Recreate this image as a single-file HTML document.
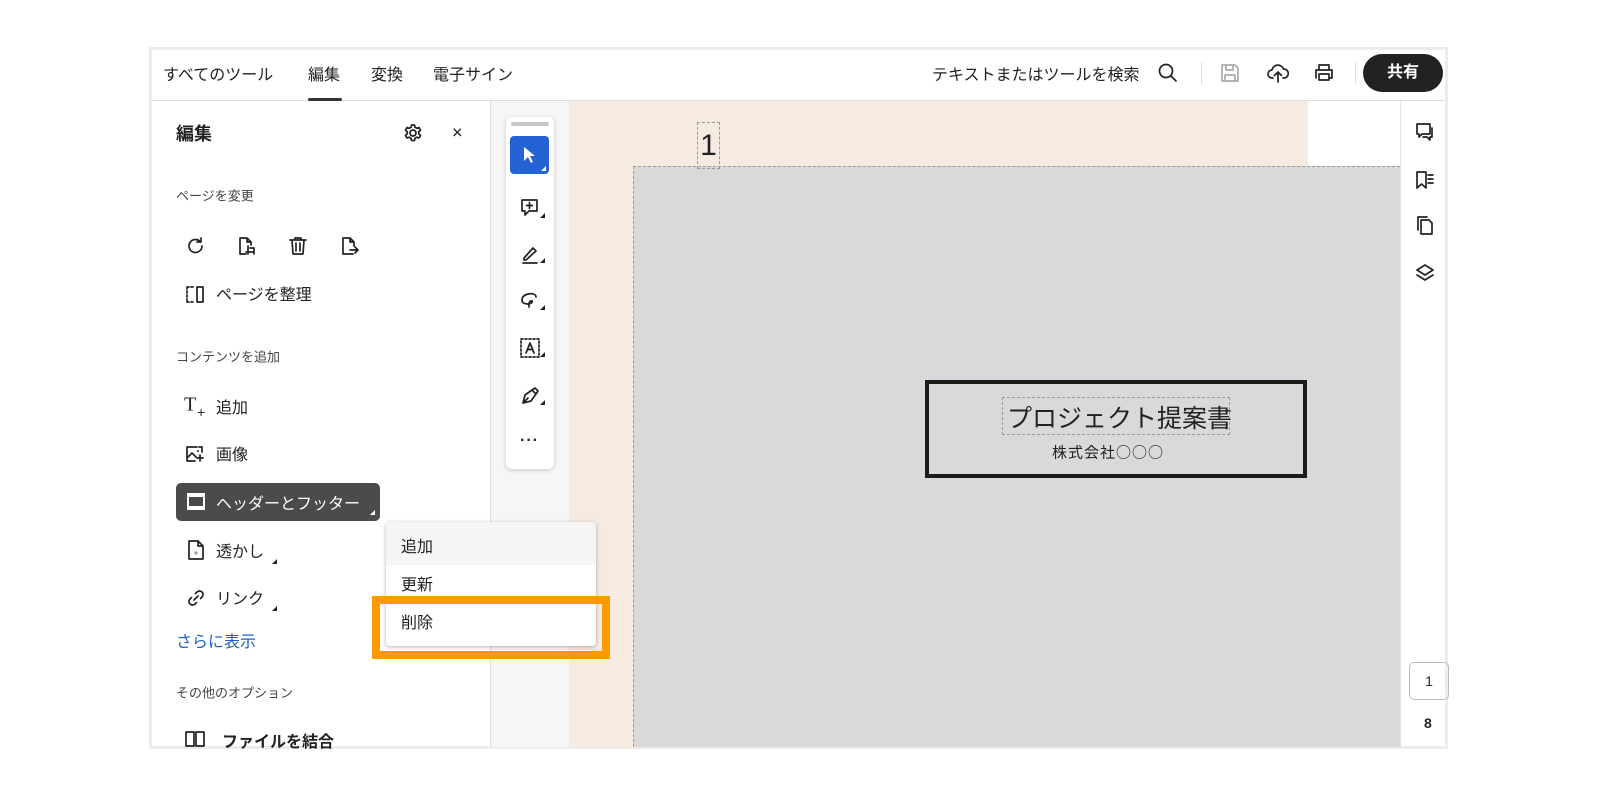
<!DOCTYPE html>
<html><head><meta charset="utf-8"><style>
*{box-sizing:border-box;margin:0;padding:0}
body{width:1600px;height:800px;background:#fff;position:relative;overflow:hidden;font-family:"Liberation Sans","Noto Sans CJK JP",sans-serif;color:#222}
.a{position:absolute}
.frame{left:149px;top:47px;width:1299px;height:702px;border:3px solid #ececec;background:#fff}
.t{position:absolute;white-space:nowrap;transform:translateY(-50%)}
svg{position:absolute;overflow:visible}
.ic{fill:none;stroke:#222;stroke-width:1.7;stroke-linecap:round;stroke-linejoin:round}
.tri{position:absolute;width:0;height:0;border-left:5px solid transparent;border-bottom:5px solid #222}
</style></head><body>
<div class="a frame"></div>
<div class="a" style="left:152px;top:100px;width:1293px;height:1px;background:#ddd"></div>
<div class="t" style="left:163px;top:73px;font-size:16px">すべてのツール</div>
<div class="t" style="left:308px;top:73px;font-size:16px">編集</div>
<div class="a" style="left:308px;top:98px;width:34px;height:3px;background:#333;border-radius:2px"></div>
<div class="t" style="left:371px;top:73px;font-size:16px">変換</div>
<div class="t" style="left:433px;top:73px;font-size:16px">電子サイン</div>
<div class="t" style="left:932px;top:73px;font-size:16px">テキストまたはツールを検索</div>
<svg style="left:1158px;top:63px" width="20" height="20"><circle cx="8" cy="8" r="6.5" class="ic" stroke-width="2"/><path d="M13 13l5 5" class="ic" stroke-width="2"/></svg>
<div class="a" style="left:1201px;top:62px;width:1px;height:22px;background:#ddd"></div>
<svg style="left:1220px;top:63px" width="20" height="20"><path d="M2 2h13l3 3v13H2z M6 2v5h7V2 M5 18v-6h10v6" class="ic" style="stroke:#aaa"/></svg>
<svg style="left:1267px;top:62px" width="22" height="22"><path d="M6 16H5a4 4 0 0 1 0-8 6 6 0 0 1 11.5-1A4.5 4.5 0 0 1 17 16h-1 M11 20v-10 M7.5 13.5L11 10l3.5 3.5" class="ic" stroke-width="2"/></svg>
<svg style="left:1313px;top:62px" width="22" height="22"><path d="M6 8V3h10v5 M3 16V8h16v8h-3 M6 16v-4h10v6H6z" class="ic" stroke-width="2"/></svg>
<div class="a" style="left:1355px;top:62px;width:1px;height:22px;background:#ddd"></div>
<div class="a" style="left:1363px;top:54px;width:80px;height:38px;border-radius:19px;background:#222;color:#fff;font-weight:bold;font-size:16px;line-height:38px;text-align:center">共有</div>
<div class="a" style="left:490px;top:101px;width:1px;height:646px;background:#ddd"></div>
<div class="t" style="left:176px;top:133px;font-size:18px;font-weight:bold">編集</div>
<svg style="left:403px;top:123px" width="20" height="20"><circle cx="10" cy="10" r="3" class="ic"/><path d="M8.5 2h3l.5 2.3 1.8 1 2.2-.8 1.5 2.6-1.8 1.6v2.1l1.8 1.6-1.5 2.6-2.2-.8-1.8 1-.5 2.3h-3l-.5-2.3-1.8-1-2.2.8-1.5-2.6 1.8-1.6V8.8L2.5 7.1 4 4.5l2.2.8 1.8-1z" class="ic" stroke-width="1.5"/></svg>
<div class="t" style="left:452px;top:133px;font-size:18px">×</div>
<div class="t" style="left:176px;top:195px;font-size:13px;color:#444">ページを変更</div>
<svg style="left:186px;top:236px" width="20" height="20"><path d="M16 10a6.5 6.5 0 1 1-2-4.7 M15 2v4h-4" class="ic" stroke-width="1.8"/></svg>
<svg style="left:237px;top:236px" width="20" height="20"><path d="M9 18H3V2h7l4 4v3 M10 2v4h4 M11 10v8 M9 16h8 M13 12h4v6" class="ic" stroke-width="1.6"/></svg>
<svg style="left:288px;top:236px" width="20" height="20"><path d="M2 4h16 M7 4V2h6v2 M4 4l1 14h10l1-14 M8 7v8 M12 7v8" class="ic" stroke-width="1.7"/></svg>
<svg style="left:340px;top:236px" width="20" height="20"><path d="M13 18H3V2h7l4 4v4 M10 2v4h4 M10 14h8 M15 11l3 3-3 3" class="ic" stroke-width="1.6"/></svg>
<svg style="left:185px;top:284px" width="20" height="20"><path d="M2 3h6 M2 18h6 M2 3v15" class="ic" stroke-width="1.6" stroke-dasharray="2 2"/><path d="M12 3h6v15h-6z" class="ic" stroke-width="1.6"/></svg>
<div class="t" style="left:216px;top:293px;font-size:16px">ページを整理</div>
<div class="t" style="left:176px;top:356px;font-size:13px;color:#444">コンテンツを追加</div>
<div class="t" style="left:184px;top:405px;font-size:20px;font-family:'Liberation Serif',serif">T</div>
<div class="t" style="left:197px;top:412px;font-size:14px">+</div>
<div class="t" style="left:216px;top:406px;font-size:16px">追加</div>
<svg style="left:185px;top:444px" width="20" height="20"><path d="M12 3H2v14h8 M2 14l5-5 4 4 M14 3h3v5 M12 14h6 M15 11v6" class="ic" stroke-width="1.6"/><circle cx="13" cy="7" r="1" fill="#222"/></svg>
<div class="t" style="left:216px;top:453px;font-size:16px">画像</div>
<div class="a" style="left:176px;top:483px;width:204px;height:38px;border-radius:5px;background:#4b4b4b"></div>
<svg style="left:186px;top:492px" width="20" height="20"><rect x="1" y="1" width="18" height="17" fill="#fff"/><rect x="3" y="5" width="14" height="9" fill="#4b4b4b"/></svg>
<div class="t" style="left:216px;top:502px;font-size:16px;color:#fff">ヘッダーとフッター</div>
<div class="tri" style="left:370px;top:510px;border-bottom-color:#fff"></div>
<svg style="left:187px;top:540px" width="18" height="20"><path d="M2 1h9l5 5v13H2z M11 1v5h5" class="ic" stroke-width="1.6"/><circle cx="9" cy="13" r="1.6" fill="#999"/></svg>
<div class="t" style="left:216px;top:550px;font-size:16px">透かし</div>
<div class="tri" style="left:272px;top:559px"></div>
<svg style="left:186px;top:588px" width="20" height="20"><path d="M8 12l4-4 M9.5 5.5l1.5-1.5a3.5 3.5 0 0 1 5 5L14.5 10.5 M10.5 14.5L9 16a3.5 3.5 0 0 1-5-5l1.5-1.5" class="ic" stroke-width="1.7"/></svg>
<div class="t" style="left:216px;top:597px;font-size:16px">リンク</div>
<div class="tri" style="left:272px;top:606px"></div>
<div class="t" style="left:176px;top:640px;font-size:16px;color:#1a63c4">さらに表示</div>
<div class="t" style="left:176px;top:692px;font-size:13px;color:#444">その他のオプション</div>
<svg style="left:185px;top:730px" width="22" height="18"><path d="M1 2h8v14H1z M11 2h8v14h-8z" class="ic" stroke-width="1.6"/></svg>
<div class="t" style="left:222px;top:740px;font-size:16px;font-weight:bold">ファイルを結合</div>
<div class="a" style="left:491px;top:101px;width:78px;height:646px;background:#f6f6f6"></div>
<div class="a" style="left:569px;top:101px;width:739px;height:65px;background:#f6ebe0"></div>
<div class="a" style="left:569px;top:166px;width:64px;height:581px;background:#f6ebe0"></div>
<div class="a" style="left:633px;top:166px;width:767px;height:581px;background:#d9d9db;border-top:1px dashed #999;border-left:1px dashed #999"></div>
<div class="a" style="left:697px;top:122px;width:23px;height:47px;border:1px dashed #999;font-size:30px;line-height:46px;text-align:center;color:#222">1</div>
<div class="a" style="left:925px;top:380px;width:382px;height:98px;border:4px solid #1e1a18"></div>
<div class="a" style="left:1002px;top:397px;width:228px;height:38px;border:1px dashed #999"></div>
<div class="t" style="left:1007px;top:417px;font-size:25px;color:#222">プロジェクト提案書</div>
<div class="t" style="left:1052px;top:452px;font-size:15px;color:#222;letter-spacing:1px;font-family:'Noto Sans CJK JP',sans-serif">株式会社○○○</div>
<div class="a" style="left:506px;top:117px;width:48px;height:352px;background:#fff;border-radius:6px;box-shadow:0 1px 5px rgba(0,0,0,.2)"></div>
<div class="a" style="left:511px;top:122px;width:38px;height:4px;border-radius:2px;background:#c8c8c8"></div>
<div class="a" style="left:510px;top:136px;width:39px;height:38px;border-radius:4px;background:#2463d4"></div>
<svg style="left:523px;top:146px" width="14" height="18"><path d="M1 1v14l4-4 3 6 2-1-3-6h5z" fill="#fff"/></svg>
<div class="tri" style="left:541px;top:166px;border-bottom-color:#fff"></div>
<svg style="left:520px;top:198px" width="20" height="20"><path d="M2 2h15v11h-8l-4 4v-4H2z M9.5 4.5v6 M6.5 7.5h6" class="ic" stroke-width="1.7"/></svg>
<div class="tri" style="left:540px;top:213px"></div>
<svg style="left:520px;top:245px" width="20" height="20"><path d="M4 13l9-10 3 3-10 9H4z M3 18h14" class="ic" stroke-width="1.7"/></svg>
<div class="tri" style="left:540px;top:258px"></div>
<svg style="left:520px;top:291px" width="20" height="20"><path d="M16 6c0-3-4-4-8-3S2 6 2 9s3 4 6 4 5-2 4-3-4 1-3 6" class="ic" stroke-width="1.7"/></svg>
<div class="tri" style="left:540px;top:305px"></div>
<svg style="left:520px;top:338px" width="20" height="20"><rect x="1" y="1" width="18" height="18" class="ic" stroke-dasharray="2 2"/><path d="M6 15l4-10 4 10 M7.5 11.5h5" class="ic" stroke-width="1.7"/></svg>
<div class="tri" style="left:540px;top:352px"></div>
<svg style="left:520px;top:386px" width="20" height="20"><path d="M3 17l2-8 7-5 4 4-5 7z M3 17l5-5 M12 4l3-2 3 3-2 3" class="ic" stroke-width="1.7"/></svg>
<div class="tri" style="left:540px;top:400px"></div>
<div class="t" style="left:520px;top:441px;font-size:16px;font-weight:bold;letter-spacing:1px">···</div>
<div class="a" style="left:386px;top:522px;width:210px;height:124px;background:#fff;border-radius:4px;box-shadow:0 1px 4px rgba(0,0,0,.3);overflow:hidden"><div style="height:43px;background:#f5f5f5"></div></div>
<div class="t" style="left:401px;top:545px;font-size:16px">追加</div>
<div class="t" style="left:401px;top:583px;font-size:16px">更新</div>
<div class="t" style="left:401px;top:621px;font-size:16px">削除</div>
<div class="a" style="left:372px;top:596px;width:238px;height:63px;border:8px solid #ff9900"></div>
<div class="a" style="left:1400px;top:101px;width:1px;height:646px;background:#e4e4e4"></div>
<svg style="left:1415px;top:122px" width="20" height="20"><path d="M2 2h13v10H7l-3 3v-3H2z M17 6v9h-2v3l-3-3H8" class="ic" stroke-width="1.6"/></svg>
<svg style="left:1415px;top:170px" width="20" height="20"><path d="M2 2h9v16l-4.5-4L2 18z M13 5h5 M13 9h5 M13 13h5" class="ic" stroke-width="1.6"/></svg>
<svg style="left:1415px;top:215px" width="20" height="20"><path d="M6 5h8l3 3v11H6z M3 15V2h9" class="ic" stroke-width="1.6"/></svg>
<svg style="left:1415px;top:263px" width="20" height="20"><path d="M10 2l8 5-8 5-8-5z M2 12l8 5 8-5" class="ic" stroke-width="1.6"/></svg>
<div class="a" style="left:1409px;top:662px;width:40px;height:38px;border:1px solid #bbb;border-radius:5px;font-size:14px;line-height:36px;text-align:center">1</div>
<div class="t" style="left:1424px;top:723px;font-size:14px;font-weight:bold">8</div>
</body></html>
